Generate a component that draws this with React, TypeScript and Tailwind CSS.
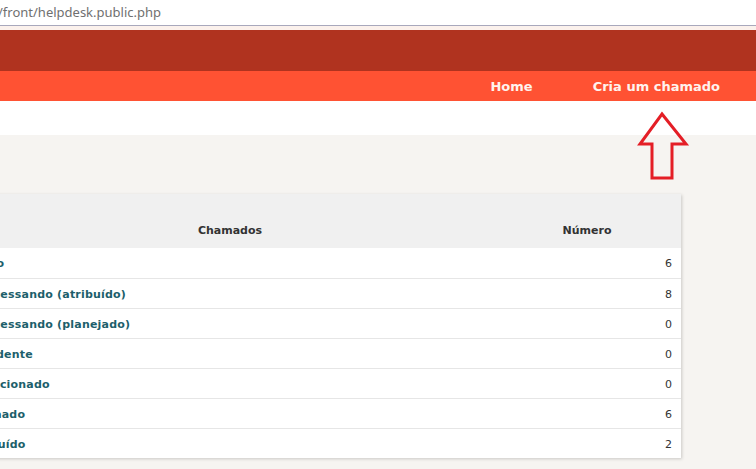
import React from 'react';

const rows = [
  { label: 'Novo', value: 6 },
  { label: 'Processando (atribuído)', value: 8 },
  { label: 'Processando (planejado)', value: 0 },
  { label: 'Pendente', value: 0 },
  { label: 'Solucionado', value: 0 },
  { label: 'Fechado', value: 6 },
  { label: 'Excluído', value: 2 },
];

const UpArrow: React.FC = () => (
  <svg width="56" height="72" viewBox="0 0 56 72" className="absolute left-[634px] top-[110px]">
    <polygon
      points="28,4 52,34 38,34 38,68 18,68 18,34 6,34"
      fill="none"
      stroke="#e41e26"
      strokeWidth="3"
      strokeLinejoin="miter"
    />
  </svg>
);

const App: React.FC = () => {
  return (
    <div className="relative w-[756px] h-[469px] overflow-hidden bg-[#f6f4f1] font-['DejaVu_Sans',Verdana,sans-serif]">
      {/* browser address bar */}
      <div className="h-[26px] bg-white border-b border-[#a8a8bc] flex items-center">
        <span className="-ml-[2px] text-[13px] text-[#707070] font-['Noto_Sans',sans-serif] leading-none">
          /front/helpdesk.public.php
        </span>
      </div>
      <div className="h-[4px] bg-[#fbf1ec]" />

      <div className="h-[41px] bg-[#b0331f]" />
      <div className="h-[30px] bg-[#ff5233] flex items-center justify-end pt-[2px] pr-[36px] gap-[60px] text-[13px] font-bold text-[#fff3ee]">
        <span>Home</span>
        <span>Cria um chamado</span>
      </div>
      <div className="h-[34px] bg-white" />

      <div className="pt-[59px]">
        <div className="-ml-[33px] w-[714px] bg-white shadow-[1px_1px_3px_rgba(0,0,0,0.18)] text-[11px]">
          <div className="h-[54px] bg-[#f0f0f0] flex items-end pb-[9px] font-bold text-[#333]">
            <div className="w-[526px] text-center">Chamados</div>
            <div className="flex-1 text-center">Número</div>
          </div>
          {rows.map((r, i) => (
            <div
              key={r.label}
              className={`h-[30px] flex items-center pt-[3px] ${i > 0 ? 'border-t border-[#e6e6e6]' : ''}`}
            >
              <div className="flex-1 pl-[5px] font-bold text-[#1d5f6b] tracking-[0.2px]">{r.label}</div>
              <div className="pr-[9px] text-[#333]">{r.value}</div>
            </div>
          ))}
        </div>
      </div>

      <UpArrow />
    </div>
  );
};

export default App;
